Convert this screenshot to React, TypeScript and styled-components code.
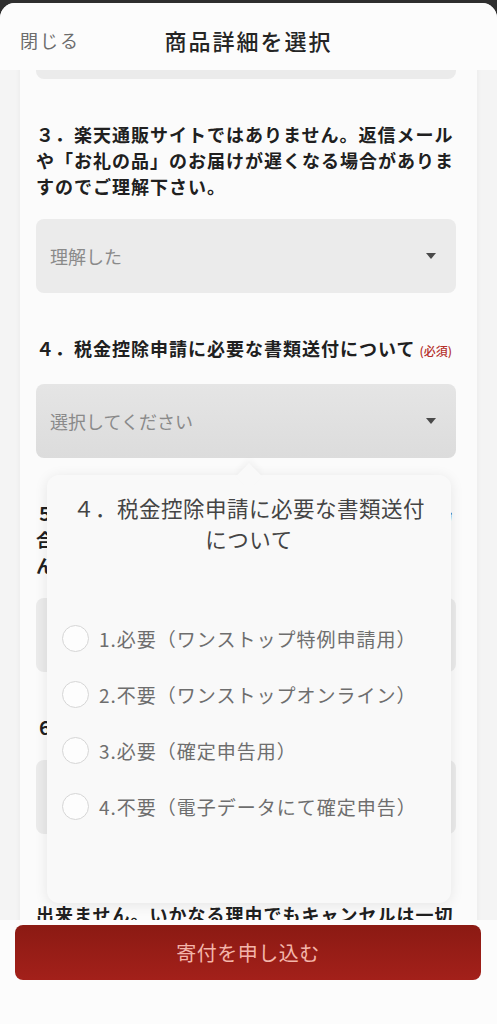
import styled, { createGlobalStyle } from "styled-components";

const GlobalStyle = createGlobalStyle`
  html, body {
    margin: 0;
    padding: 0;
    background: #2f2f2f;
  }
  body {
    font-family: "Noto Sans CJK JP", "Noto Sans", sans-serif;
  }
  * {
    box-sizing: border-box;
  }
`;

const Sheet = styled.div`
  margin-top: 3px;
  height: 1021px;
  display: flex;
  flex-direction: column;
  background: #f4f4f4;
  border-radius: 15px 15px 0 0;
  overflow: hidden;
`;

const Header = styled.header`
  position: relative;
  z-index: 2;
  height: 67px;
  flex-shrink: 0;
  display: grid;
  grid-template-columns: 1fr auto 1fr;
  align-items: center;
  padding: 6px 20px 0;
  background: #fcfcfc;
`;

const CloseButton = styled.span`
  font-size: 18px;
  letter-spacing: 2px;
  color: #6c6c6c;
`;

const Title = styled.h1`
  margin: 0;
  font-size: 22px;
  font-weight: 500;
  letter-spacing: 2px;
  color: #252525;
`;

const Content = styled.main`
  position: relative;
  flex: 1;
  overflow: hidden;
`;

const Card = styled.section`
  margin: -81px 20px 0;
  padding: 16px 21px 40px 16px;
  background: #fbfbfb;
  box-shadow: 0 0 6px rgba(0, 0, 0, 0.05);
  display: flex;
  flex-direction: column;
  gap: 42px;
`;

const Field = styled.div`
  display: flex;
  flex-direction: column;
  gap: 20px;
`;

const Label = styled.p`
  margin: 0;
  font-size: 18px;
  line-height: 26px;
  letter-spacing: 1px;
  font-weight: 700;
  color: #202020;
`;

const Notice = styled(Label)`
  margin-top: 25px;
`;

const Required = styled.span`
  font-size: 12px;
  letter-spacing: 0;
  font-weight: 500;
  color: #b5312b;
  margin-left: 4px;
`;

const Select = styled.div<{ $open?: boolean }>`
  height: 74px;
  border-radius: 8px;
  padding: 0 20px 0 14px;
  display: flex;
  align-items: center;
  justify-content: space-between;
  background: ${(p) =>
    p.$open ? "linear-gradient(#e5e5e5, #dcdcdc)" : "#ebebeb"};
  font-size: 18px;
  color: #8a8a8a;
`;

const Caret = styled.span`
  width: 0;
  height: 0;
  border-left: 5px solid transparent;
  border-right: 5px solid transparent;
  border-top: 6px solid #4a4a4a;
`;

const Popup = styled.div`
  position: absolute;
  top: 405px;
  left: 47px;
  width: 404px;
  height: 428px;
  background: #f9f9f9;
  border-radius: 12px;
  box-shadow: 0 2px 14px rgba(0, 0, 0, 0.09);
  padding: 17px 15px 0;

  &::before {
    content: "";
    position: absolute;
    top: -8px;
    left: 50%;
    width: 18px;
    height: 18px;
    margin-left: -9px;
    background: #f9f9f9;
    transform: rotate(45deg);
    box-shadow: -3px -3px 6px rgba(0, 0, 0, 0.04);
  }
`;

const PopupTitle = styled.h2`
  position: relative;
  max-width: 372px;
  margin: 0 auto 56px;
  font-size: 21.5px;
  letter-spacing: 0.5px;
  line-height: 31px;
  font-weight: 400;
  text-align: center;
  color: #444;
`;

const OptionList = styled.ul`
  margin: 0;
  padding: 0;
  list-style: none;
`;

const Option = styled.li`
  height: 56px;
  display: flex;
  align-items: center;
  gap: 10px;
  font-size: 19px;
  letter-spacing: 1px;
  color: #6e6e6e;
`;

const Radio = styled.span`
  width: 27px;
  height: 27px;
  flex-shrink: 0;
  border-radius: 50%;
  border: 1.5px solid #d6d6d6;
  background: #fdfdfd;
`;

const Footer = styled.footer`
  position: relative;
  z-index: 2;
  height: 104px;
  flex-shrink: 0;
  padding: 5px 16px 0 15px;
  background: #fcfcfc;
`;

const SubmitButton = styled.button`
  width: 100%;
  height: 55px;
  border: none;
  border-radius: 8px;
  background: linear-gradient(#8b1a13, #a3201a);
  color: #f3b5aa;
  font-family: inherit;
  font-size: 20px;
  letter-spacing: 0.5px;
`;

const options = [
  "1.必要（ワンストップ特例申請用）",
  "2.不要（ワンストップオンライン）",
  "3.必要（確定申告用）",
  "4.不要（電子データにて確定申告）",
];

const q5 =
  "５．お礼の品は天候や収穫状況により、遅れる場合がございます。発送日の指定はお受けできません。予めご了承ください。";

export default function App() {
  return (
    <>
      <GlobalStyle />
      <Sheet>
        <Header>
          <CloseButton>閉じる</CloseButton>
          <Title>商品詳細を選択</Title>
          <span />
        </Header>
        <Content>
          <Card>
            <Select>
              理解した
              <Caret />
            </Select>
            <Field>
              <Label>
                ３．楽天通販サイトではありません。返信メールや「お礼の品」のお届けが遅くなる場合がありますのでご理解下さい。
              </Label>
              <Select>
                理解した
                <Caret />
              </Select>
            </Field>
            <Field>
              <Label>
                ４．税金控除申請に必要な書類送付について
                <Required>(必須)</Required>
              </Label>
              <Select $open>
                選択してください
                <Caret />
              </Select>
            </Field>
            <Field>
              <Label>{q5}</Label>
              <Select>
                理解した
                <Caret />
              </Select>
            </Field>
            <Field>
              <Label>６．配送日時の指定について</Label>
              <Select>
                選択してください
                <Caret />
              </Select>
            </Field>
            <Notice>
              出来ません。いかなる理由でもキャンセルは一切お受けできませんのでご注意下さい。
            </Notice>
          </Card>
          <Popup>
            <PopupTitle>４．税金控除申請に必要な書類送付について</PopupTitle>
            <OptionList>
              {options.map((o) => (
                <Option key={o}>
                  <Radio />
                  {o}
                </Option>
              ))}
            </OptionList>
          </Popup>
        </Content>
        <Footer>
          <SubmitButton>寄付を申し込む</SubmitButton>
        </Footer>
      </Sheet>
    </>
  );
}
